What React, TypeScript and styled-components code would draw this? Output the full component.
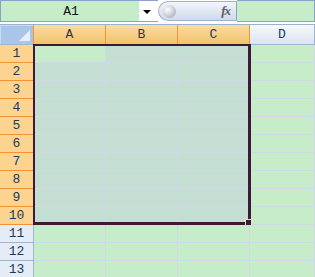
import React from 'react';
import styled, { createGlobalStyle } from 'styled-components';

const GlobalStyle = createGlobalStyle`
  html, body {
    margin: 0;
    padding: 0;
    background: #ffffff;
  }
  #root {
    width: 315px;
    height: 277px;
    overflow: hidden;
  }
`;

const Window = styled.div`
  width: 315px;
  height: 277px;
  overflow: hidden;
  background: #ffffff;
  font-family: "Liberation Mono", "DejaVu Sans Mono", monospace;
`;

const FormulaBar = styled.div`
  display: flex;
  height: 22px;
  background: #ffffff;
`;

const NameBox = styled.div`
  width: 139px;
  box-sizing: border-box;
  border: 1px solid #88a3c8;
  border-right: none;
  background: #c6ecc9;
  display: flex;
  align-items: center;
  justify-content: center;
  font-size: 13px;
  color: #111;
  padding-left: 2px;
`;

const DropButton = styled.div`
  width: 19px;
  box-sizing: border-box;
  border-top: 1px solid #88a3c8;
  border-bottom: 1px solid #88a3c8;
  background: #ffffff;
  display: flex;
  align-items: center;
  justify-content: center;

  &::after {
    content: '';
    border-left: 4px solid transparent;
    border-right: 4px solid transparent;
    border-top: 4px solid #000;
    margin-left: -4px;
    margin-top: 1px;
  }
`;

const FxPill = styled.div`
  width: 79px;
  box-sizing: border-box;
  margin: 1px 0;
  border: 1px solid #9fb2cc;
  border-right-color: #8aa2c4;
  border-radius: 10px 0 0 10px;
  background: linear-gradient(#f4f7fb, #dfe7f2 50%, #cfdbeb);
  display: flex;
  align-items: center;
  justify-content: space-between;
  padding: 0 6px 0 4px;
`;

const Knob = styled.div`
  width: 13px;
  height: 13px;
  border-radius: 50%;
  background: radial-gradient(circle at 35% 35%, #ffffff, #c8ccd4 55%, #8f97a3);
`;

const FxLabel = styled.span`
  font-family: "Liberation Serif", "DejaVu Serif", serif;
  font-style: italic;
  font-weight: bold;
  font-size: 13px;
  color: #5a5e66;
  letter-spacing: -1px;
`;

const FormulaInput = styled.div`
  flex: 1;
  box-sizing: border-box;
  border: 1px solid #88a3c8;
  border-left: none;
  background: #c6ecc9;
`;

const Spacer = styled.div`
  height: 2px;
  border-bottom: 1px solid #9bb1cf;
`;

const SheetArea = styled.div`
  position: relative;
`;

const Sheet = styled.div`
  display: grid;
  grid-template-columns: 34px 72px 72px 72px 1fr;
  grid-template-rows: 20px repeat(13, 18px);
  background: #c6ecc9;
`;

const Corner = styled.div`
  box-sizing: border-box;
  position: relative;
  background: #a9c5ea;
  border-right: 1px solid #f29436;
  border-bottom: 1px solid #9eb6ce;
  box-shadow: inset 1px 1px 0 #c9dbf3;

  &::after {
    content: '';
    position: absolute;
    right: 3px;
    bottom: 3px;
    border-left: 11px solid transparent;
    border-bottom: 11px solid #e9eff8;
  }
`;

const ColHeader = styled.div<{ selected: boolean }>`
  box-sizing: border-box;
  display: flex;
  align-items: center;
  justify-content: center;
  font-size: 13px;
  color: #213a5a;
  background: ${p => p.selected
    ? 'linear-gradient(#f9dca6, #f6cf88 50%, #f2c26c)'
    : 'linear-gradient(#f7f9fc, #e9eef6 50%, #dce4f0)'};
  border-right: 1px solid ${p => p.selected ? '#f29436' : '#9eb6ce'};
  border-bottom: 1px solid ${p => p.selected ? '#f29436' : '#9eb6ce'};
`;

const RowHeader = styled.div<{ selected: boolean }>`
  box-sizing: border-box;
  display: flex;
  align-items: center;
  justify-content: center;
  font-size: 13px;
  color: #213a5a;
  background: ${p => p.selected ? '#fdd48f' : '#e4ecf7'};
  border-right: 1px solid ${p => p.selected ? '#f29436' : '#9eb6ce'};
  border-bottom: 1px solid ${p => p.selected ? '#f29436' : '#9eb6ce'};
`;

const Cell = styled.div<{ selected: boolean; active: boolean }>`
  box-sizing: border-box;
  background: ${p => p.active ? '#c6ecc9' : p.selected ? '#c4ded3' : '#c6ecc9'};
  border-right: 1px solid #d0d7e5;
  border-bottom: 1px solid #d0d7e5;
`;

const Selection = styled.div`
  position: absolute;
  left: 33px;
  top: 19px;
  width: 218px;
  height: 181px;
  box-sizing: border-box;
  border-top: 2px solid #3e1a36;
  border-left: 2px solid #3e1a36;
  border-right: 3px solid #3e1a36;
  border-bottom: 3px solid #3e1a36;
  pointer-events: none;
`;

const FillHandle = styled.div`
  position: absolute;
  left: 245px;
  top: 194px;
  width: 7px;
  height: 7px;
  box-sizing: border-box;
  background: #3e1a36;
  border: 1px solid #c6ecc9;
`;

const columns = ['A', 'B', 'C', 'D'];
const rows = Array.from({ length: 13 }, (_, i) => i + 1);

const App: React.FC = () => {
  return (
    <Window>
      <GlobalStyle />
      <FormulaBar>
        <NameBox>A1</NameBox>
        <DropButton />
        <FxPill>
          <Knob />
          <FxLabel>fx</FxLabel>
        </FxPill>
        <FormulaInput />
      </FormulaBar>
      <Spacer />
      <SheetArea>
        <Sheet>
          <Corner />
          {columns.map((c, i) => (
            <ColHeader key={c} selected={i < 3}>{c}</ColHeader>
          ))}
          {rows.map(r => (
            <React.Fragment key={r}>
              <RowHeader selected={r <= 10}>{r}</RowHeader>
              {columns.map((c, i) => (
                <Cell
                  key={c}
                  selected={r <= 10 && i < 3}
                  active={r === 1 && i === 0}
                />
              ))}
            </React.Fragment>
          ))}
        </Sheet>
        <Selection />
        <FillHandle />
      </SheetArea>
    </Window>
  );
};

export default App;
